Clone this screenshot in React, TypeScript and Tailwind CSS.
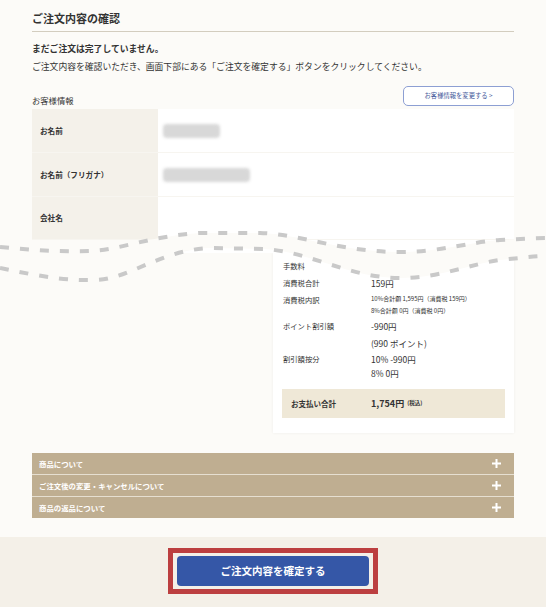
import React from 'react';

const font = { fontFamily: '"Noto Sans CJK JP", "Noto Sans", sans-serif' };

const customerRows = [
  { label: 'お名前', blur: 57, h: 'h-[44px]' },
  { label: 'お名前（フリガナ）', blur: 87, h: 'h-[44px]' },
  { label: '会社名', blur: 0, h: 'h-[43px]' },
];

const accordions = ['商品について', 'ご注文後の変更・キャンセルについて', '商品の返品について'];

const Plus: React.FC = () => (
  <svg width="9" height="9" viewBox="0 0 9 9">
    <rect x="3.5" y="0" width="2" height="9" fill="#fff" />
    <rect x="0" y="3.5" width="9" height="2" fill="#fff" />
  </svg>
);

// torn-page wave drawn over the middle of the page
const TornWave: React.FC = () => {
  const upper = 'M0,247 C30,250 60,252 90,251 C120,250 150,236 200,233 L260,233 C300,234 340,252 400,252 C440,252 470,242 500,240 C520,239 535,238 546,238';
  const lower = 'M0,268 C30,274 60,281 95,280 C130,279 160,250 210,248 L265,249 C310,252 350,278 400,278 C440,278 470,264 500,260 C520,258 535,256 546,256';
  const band =
    upper +
    ' L546,256 C535,256 520,258 500,260 C470,264 440,278 400,278 C350,278 310,252 265,249 L210,248 C160,250 130,279 95,280 C60,281 30,274 0,268 Z';
  return (
    <svg
      className="absolute left-0 top-0 pointer-events-none"
      width="546"
      height="607"
      viewBox="0 0 546 607"
    >
      <path d={band} fill="#fcfbf8" />
      <path d={upper} fill="none" stroke="#c9c9c9" strokeWidth="4" strokeDasharray="9 11" />
      <path d={lower} fill="none" stroke="#c9c9c9" strokeWidth="4" strokeDasharray="9 11" />
    </svg>
  );
};

export default function App() {
  return (
    <div className="relative w-[546px] h-[607px] overflow-hidden bg-[#fcfbf8] text-[#333]" style={font}>
      <div className="px-[32px]">
        {/* Title */}
        <div className="pt-[11px] pb-[6px] border-b border-[#d3cdbf]">
          <h1 className="text-[11px] leading-[14px] font-bold">ご注文内容の確認</h1>
        </div>

        {/* Notice */}
        <div className="mt-[8px] text-[8.8px] leading-[18px]">
          <p className="font-bold">まだご注文は完了していません。</p>
          <p>ご注文内容を確認いただき、画面下部にある「ご注文を確定する」ボタンをクリックしてください。</p>
        </div>

        {/* Customer info header */}
        <div className="mt-[10px] flex items-end justify-between h-[20px]">
          <span className="text-[8.3px] leading-[12px]">お客様情報</span>
          <button className="w-[111px] h-[20px] rounded-[5px] border border-[#8d9fd3] bg-white text-[6.3px] text-[#45599a] flex items-center justify-center">
            お客様情報を変更する &gt;
          </button>
        </div>

        {/* Customer table */}
        <div className="mt-[3px]">
          {customerRows.map((r) => (
            <div key={r.label} className={`flex ${r.h} border-b border-[#f7f5f0]`}>
              <div className="w-[126px] bg-[#f4f1ea] flex items-center pl-[8px] text-[7.6px] font-bold">
                {r.label}
              </div>
              <div className="flex-1 bg-white flex items-center pl-[5px]">
                {r.blur > 0 && (
                  <div className="h-[14px] rounded-[4px] bg-[#d8d8d8] blur-[1.5px]" style={{ width: r.blur }} />
                )}
              </div>
            </div>
          ))}
          <div className="flex h-[13px]">
            <div className="w-[126px]" />
            <div className="flex-1 bg-white" />
          </div>
        </div>

        {/* Totals card */}
        <div className="ml-auto w-[241px] bg-white px-[9px] pt-[5px] pb-[15px] shadow-[0_0_3px_rgba(0,0,0,0.06)]">
          <div className="pl-[1px] text-[7.3px]">
            <div className="flex leading-[17px]">
              <span className="w-[88px]">手数料</span>
            </div>
            <div className="flex leading-[17px]">
              <span className="w-[88px]">消費税合計</span>
              <span className="text-[8.5px]">159円</span>
            </div>
            <div className="flex h-[25px]">
              <span className="w-[88px] leading-[17px]">消費税内訳</span>
              <div className="pt-[1px] text-[6px] leading-[12px]">
                <p>10%合計額 1,595円（消費税 159円）</p>
                <p>8%合計額 0円（消費税 0円）</p>
              </div>
            </div>
            <div className="flex mt-[1px] leading-[17px]">
              <span className="w-[88px]">ポイント割引額</span>
              <div className="text-[8.5px]">
                <p>-990円</p>
                <p>(990 ポイント)</p>
              </div>
            </div>
            <div className="flex leading-[14px]">
              <span className="w-[88px]">割引額按分</span>
              <div className="text-[8.5px]">
                <p>10% -990円</p>
                <p>8% 0円</p>
              </div>
            </div>
          </div>
          <div className="mt-[9px] h-[29px] bg-[#efe8d7] flex items-center pl-[9px] font-bold">
            <span className="w-[80px] text-[7.5px]">お支払い合計</span>
            <span className="text-[9px]">1,754円</span>
            <span className="ml-[3px] text-[5.5px]">(税込)</span>
          </div>
        </div>

        {/* Accordions */}
        <div className="mt-[20px] flex flex-col gap-px bg-[#e6dfd1]">
          {accordions.map((a) => (
            <div key={a} className="h-[21px] bg-[#bfae91] flex items-center justify-between pl-[7px] pr-[13px]">
              <span className="text-[7.4px] font-bold text-white">{a}</span>
              <Plus />
            </div>
          ))}
        </div>
      </div>

      {/* Confirm area */}
      <div className="mt-[19px] h-[70px] bg-[#f4f0e8] flex justify-center pt-[11px]">
        <div className="h-[46px] border-[5px] border-[#bc3f40] px-[4px] py-[3px]">
          <button className="w-[192px] h-[30px] rounded-[4px] bg-[#3557a7] text-white text-[10.5px] font-bold">
            ご注文内容を確定する
          </button>
        </div>
      </div>

      <TornWave />
    </div>
  );
}
